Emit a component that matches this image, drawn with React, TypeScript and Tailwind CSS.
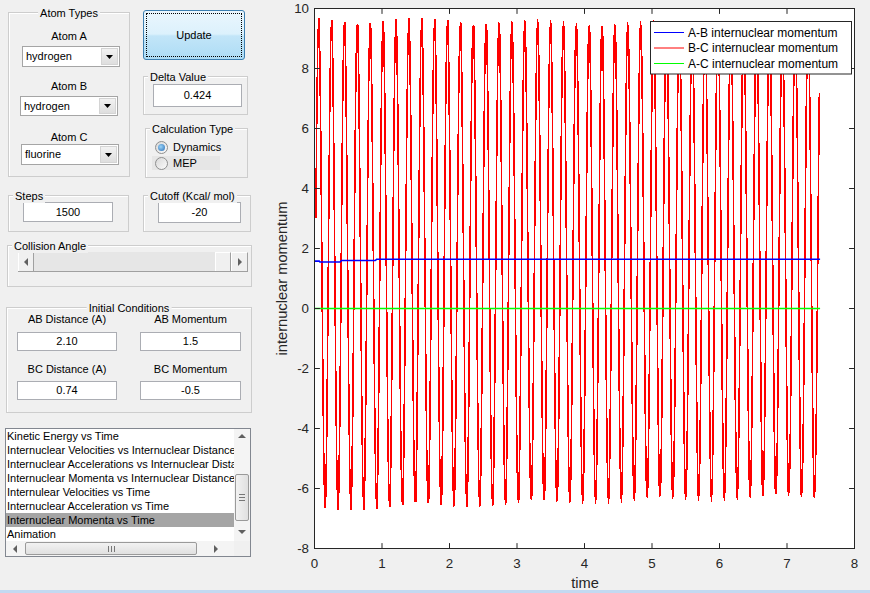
import React, { useMemo } from 'react';

// plot geometry (page coordinates)
const X0 = 314.5;
const XS = 67.5;
const Y0 = 308.5;
const YS = 30;
const px = (t: number) => X0 + t * XS;
const py = (v: number) => Y0 - v * YS;

const Group = ({ title, center, className, children }: { title: string; center?: boolean; className?: string; children?: React.ReactNode }) => (
  <div className={`relative border border-[#cdcdcd] shadow-[inset_1px_1px_0_#ffffff] ${className ?? ''}`}>
    <span className={`absolute top-[-7px] px-[2px] bg-[#f0f0f0] leading-[14px] whitespace-nowrap ${center ? 'left-1/2 -translate-x-1/2' : 'left-[4px]'}`}>
      {title}
    </span>
    {children}
  </div>
);

const Field = ({ value, className }: { value: string; className?: string }) => (
  <div className={`flex items-center justify-center border border-[#abadb3] bg-white ${className ?? ''}`}>{value}</div>
);

const Select = ({ value, className }: { value: string; className?: string }) => (
  <div className={`flex w-[98px] border border-[#a5a5a5] bg-white ${className ?? ''}`}>
    <div className="flex-1 flex items-center pl-[3px]">{value}</div>
    <div className="w-[17px] m-[1px] flex items-center justify-center border border-[#d4d4d4] bg-[linear-gradient(#f2f2f2,#dedede)]">
      <svg width="7" height="4" viewBox="0 0 7 4">
        <polygon points="0,0 7,0 3.5,4" fill="#000" />
      </svg>
    </div>
  </div>
);

const Radio = ({ checked }: { checked?: boolean }) => (
  <div className="w-[13px] h-[13px] rounded-full border border-[#8e8f8f] bg-[linear-gradient(135deg,#d8d8d8,#fbfbfb)] flex items-center justify-center">
    {checked && <div className="w-[7px] h-[7px] rounded-full bg-[radial-gradient(circle_at_40%_40%,#9ad4f8,#2a6cb5)]" />}
  </div>
);

const Arrow = ({ dir, color = '#606060' }: { dir: 'left' | 'right' | 'up' | 'down'; color?: string }) => {
  const pts = {
    left: '4,0 4,8 0,4',
    right: '0,0 0,8 4,4',
    up: '0,4 8,4 4,0',
    down: '0,0 8,0 4,4',
  }[dir];
  const vertical = dir === 'up' || dir === 'down';
  return (
    <svg width={vertical ? 8 : 4} height={vertical ? 4 : 8} viewBox={vertical ? '0 0 8 4' : '0 0 4 8'}>
      <polygon points={pts} fill={color} />
    </svg>
  );
};

const plots = [
  'Kinetic Energy vs Time',
  'Internuclear Velocities vs Internuclear Distance',
  'Internuclear Accelerations vs Internuclear Distance',
  'Internuclear Momenta vs Internuclear Distance',
  'Internulear Velocities vs Time',
  'Internuclear Acceleration vs Time',
  'Internuclear Momenta vs Time',
  'Animation',
];

const Plot = () => {
  const red = useMemo(() => {
    const T = 0.1908;
    const pts: string[] = [];
    for (let t = 0.02; t <= 7.49; t += 0.0148) {
      const c = 1.475 + 0.0165 * t;
      const a = 8.225 - 0.0365 * t;
      const v = c + a * Math.cos((2 * Math.PI * (t - 0.062)) / T);
      pts.push(`${px(t).toFixed(2)},${py(v).toFixed(2)}`);
    }
    return pts.join(' ');
  }, []);

  const blue = [
    [0, 1.58], [0.07, 1.58], [0.08, 1.55], [0.38, 1.55], [0.4, 1.6], [0.9, 1.6], [0.92, 1.64], [7.49, 1.64],
  ].map(([t, v]) => `${px(t)},${py(v)}`).join(' ');

  const xt = [0, 1, 2, 3, 4, 5, 6, 7, 8];
  const yt = [10, 8, 6, 4, 2, 0, -2, -4, -6, -8];
  const axis = '#262626';

  return (
    <svg width="610" height="590" viewBox="260 0 610 590" className="block">
      <rect x={X0} y={py(10)} width={XS * 8} height={YS * 18} fill="#fff" />
      <polyline points={red} fill="none" stroke="#ff0000" strokeWidth="1.6" strokeLinejoin="bevel" shapeRendering="crispEdges" />
      <polyline points={blue} fill="none" stroke="#0000ff" strokeWidth="1.6" />
      <line x1={px(0)} y1={py(0)} x2={px(7.49)} y2={py(0)} stroke="#00ff00" strokeWidth="1.6" />
      <rect x={X0} y={py(10)} width={XS * 8} height={YS * 18} fill="none" stroke={axis} strokeWidth="1" />
      {xt.map((t) => (
        <g key={t}>
          <line x1={px(t)} y1={py(-8)} x2={px(t)} y2={py(-8) - 5.4} stroke={axis} />
          <line x1={px(t)} y1={py(10)} x2={px(t)} y2={py(10) + 5.4} stroke={axis} />
          <text x={px(t)} y={568} textAnchor="middle" fontSize="13.33" fill={axis}>{t}</text>
        </g>
      ))}
      {yt.map((v) => (
        <g key={v}>
          <line x1={X0} y1={py(v)} x2={X0 + 5.4} y2={py(v)} stroke={axis} />
          <line x1={px(8)} y1={py(v)} x2={px(8) - 5.4} y2={py(v)} stroke={axis} />
          <text x={309} y={py(v) + 4.7} textAnchor="end" fontSize="13.33" fill={axis}>{v}</text>
        </g>
      ))}
      <text x={585} y={588} textAnchor="middle" fontSize="14.67" fill={axis}>time</text>
      <text x={0} y={0} transform={`translate(287 ${(py(10) + py(-8)) / 2}) rotate(-90)`} textAnchor="middle" fontSize="14.67" fill={axis}>
        internuclear momentum
      </text>
      <rect x={650.5} y={21.5} width={201} height={52.5} fill="#fff" stroke={axis} />
      {[
        ['A-B internuclear momentum', '#0000ff', 32.5],
        ['B-C internuclear momentum', '#ff0000', 48],
        ['A-C internuclear momentum', '#00ff00', 63.5],
      ].map(([label, color, y]) => (
        <g key={label as string}>
          <line x1={654} y1={y as number} x2={684} y2={y as number} stroke={color as string} strokeWidth="1" />
          <text x={688} y={(y as number) + 4.3} fontSize="12" fill="#000">{label}</text>
        </g>
      ))}
    </svg>
  );
};

const App = () => {
  return (
    <div className="w-[870px] h-[593px] overflow-hidden bg-[#f0f0f0] text-[11px] text-black font-['Liberation_Sans',Arial,sans-serif] flex flex-col">
      <div className="flex h-[590px]">
        {/* controls */}
        <div className="w-[260px] shrink-0 flex flex-col">
          <div className="flex mt-[10px]">
            <Group title="Atom Types" center className="mt-[2px] ml-[8px] w-[122px] h-[165px] flex flex-col">
              <div className="mt-[17px] h-[13px] leading-[13px] text-center">Atom A</div>
              <Select value="hydrogen" className="mt-[3px] ml-[13px] h-[21px]" />
              <div className="mt-[13px] h-[13px] leading-[13px] text-center">Atom B</div>
              <Select value="hydrogen" className="mt-[3px] ml-[11px] h-[20px]" />
              <div className="mt-[15px] h-[13px] leading-[13px] text-center">Atom C</div>
              <Select value="fluorine" className="ml-[12px] h-[21px]" />
            </Group>
            <div className="ml-[13px] flex flex-col">
              <div className="w-[102px] h-[50px] rounded-[3px] border border-[#3c7fb1] bg-[linear-gradient(#eaf6fd_0%,#dcf1fc_48%,#c2e5f8_52%,#addcf5_100%)] flex items-center justify-center outline-1 outline-dotted outline-black outline-offset-[-4px]">
                Update
              </div>
              <Group title="Delta Value" className="mt-[16px] w-[105px] h-[39px]">
                <Field value="0.424" className="mt-[7px] ml-[9px] w-[89px] h-[23px]" />
              </Group>
              <Group title="Calculation Type" className="mt-[13px] ml-[2px] w-[103px] h-[50px] flex flex-col">
                <div className="mt-[11px] ml-[6px] h-[14px] flex items-center gap-[5px] pl-[3px]">
                  <Radio checked />
                  <span>Dynamics</span>
                </div>
                <div className="mt-[2px] ml-[6px] w-[68px] h-[14px] flex items-center gap-[5px] pl-[3px] bg-[#e6e6e6]">
                  <Radio />
                  <span>MEP</span>
                </div>
              </Group>
            </div>
          </div>

          <div className="flex mt-[17px]">
            <Group title="Steps" className="ml-[8px] w-[121px] h-[37px]">
              <Field value="1500" className="mt-[6px] ml-[14px] w-[90px] h-[20px]" />
            </Group>
            <Group title="Cutoff (Kcal/ mol)" className="ml-[14px] w-[108px] h-[37px]">
              <Field value="-20" className="mt-[6px] ml-[14px] w-[83px] h-[21px]" />
            </Group>
          </div>

          <Group title="Collision Angle" className="mt-[13px] ml-[7px] w-[245px] h-[42px]">
            <div className="mt-[6px] ml-[10px] w-[230px] h-[20px] flex bg-[#e6e6e6] border-b border-[#a0a0a0]">
              <div className="w-[16px] flex items-center justify-center bg-[#f0f0f0] border-t border-l border-white border-r border-r-[#a0a0a0]">
                <Arrow dir="left" />
              </div>
              <div className="flex-1" />
              <div className="w-[16px] bg-[#f0f0f0] border-t border-l border-white border-r border-r-[#a0a0a0]" />
              <div className="w-[17px] flex items-center justify-center bg-[#f0f0f0] border-t border-l border-white border-r border-r-[#a0a0a0]">
                <Arrow dir="right" />
              </div>
            </div>
          </Group>

          <Group title="Initial Conditions" center className="mt-[20px] ml-[6px] w-[246px] h-[106px]">
            <div className="flex ml-[10px] mt-[5px] gap-[23px]">
              <div className="flex flex-col w-[100px]">
                <div className="h-[13px] leading-[13px] text-center whitespace-nowrap">AB Distance (A)</div>
                <Field value="2.10" className="mt-[6px] h-[19px]" />
                <div className="mt-[12px] h-[13px] leading-[13px] text-center whitespace-nowrap">BC Distance (A)</div>
                <Field value="0.74" className="mt-[5px] h-[19px]" />
              </div>
              <div className="flex flex-col w-[101px]">
                <div className="h-[13px] leading-[13px] text-center">AB Momentum</div>
                <Field value="1.5" className="mt-[6px] h-[19px]" />
                <div className="mt-[12px] h-[13px] leading-[13px] text-center">BC Momentum</div>
                <Field value="-0.5" className="mt-[5px] h-[19px]" />
              </div>
            </div>
          </Group>

          {/* plot list */}
          <div className="mt-[15px] ml-[5px] w-[246px] h-[129px] border border-[#828790] bg-white flex flex-col">
            <div className="flex h-[112px]">
              <div className="w-[228px] overflow-hidden">
                {plots.map((p, i) => (
                  <div key={p} className={`h-[14px] leading-[14px] pl-[1px] whitespace-nowrap ${i === 6 ? 'bg-[#a5a5a5]' : ''}`}>{p}</div>
                ))}
              </div>
              <div className="w-[16px] bg-[#f4f4f4] flex flex-col items-center">
                <div className="h-[14px] flex items-center justify-center"><Arrow dir="up" /></div>
                <div className="mt-[31px] w-[14px] h-[47px] rounded-[2px] border border-[#9a9a9a] bg-[linear-gradient(90deg,#f2f2f2,#e0e0e0)] flex flex-col items-center justify-center gap-[2px]">
                  <div className="w-[6px] h-px bg-[#777]" />
                  <div className="w-[6px] h-px bg-[#777]" />
                  <div className="w-[6px] h-px bg-[#777]" />
                </div>
                <div className="mt-[4px] h-[14px] flex items-center justify-center"><Arrow dir="down" /></div>
              </div>
            </div>
            <div className="flex h-[15px]">
              <div className="w-[228px] bg-[#f4f4f4] flex items-center">
                <div className="w-[17px] flex justify-center"><Arrow dir="left" /></div>
                <div className="ml-[2px] w-[172px] h-[13px] rounded-[2px] border border-[#9a9a9a] bg-[linear-gradient(#f2f2f2,#e0e0e0)] flex items-center justify-center gap-[2px]">
                  <div className="w-px h-[6px] bg-[#777]" />
                  <div className="w-px h-[6px] bg-[#777]" />
                  <div className="w-px h-[6px] bg-[#777]" />
                </div>
                <div className="flex-1 flex justify-center"><Arrow dir="right" /></div>
              </div>
              <div className="flex-1 bg-[#f0f0f0]" />
            </div>
          </div>
        </div>

        {/* axes */}
        <Plot />
      </div>
      <div className="h-[3px] bg-[#c3d9f1]" />
    </div>
  );
};

export default App;
